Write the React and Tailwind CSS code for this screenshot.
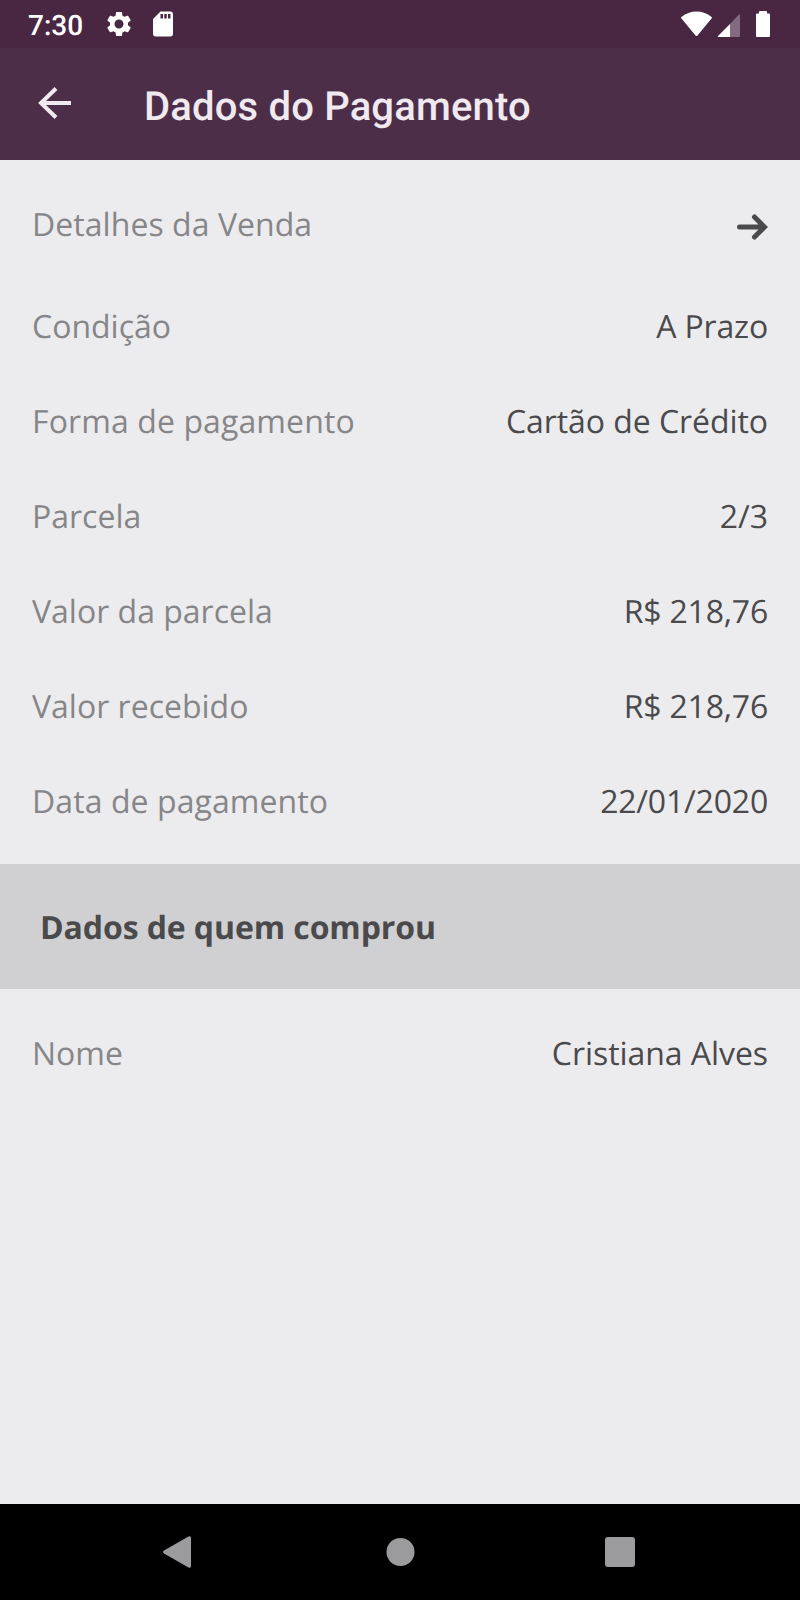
const rows = [
  { label: "Condição", value: "A Prazo", valueClass: "tracking-[-0.15px]" },
  {
    label: "Forma de pagamento",
    value: "Cartão de Crédito",
    labelClass: "tracking-[0.11px]",
    valueClass: "tracking-[-0.06px]",
  },
  { label: "Parcela", value: "2/3" },
  { label: "Valor da parcela", value: "R$ 218,76", valueClass: "tracking-[-0.2px]" },
  { label: "Valor recebido", value: "R$ 218,76", valueClass: "tracking-[-0.2px]" },
  {
    label: "Data de pagamento",
    value: "22/01/2020",
    labelClass: "tracking-[0.08px]",
    valueClass: "tracking-[-0.2px]",
  },
];

const InfoRow = ({ label, value, labelClass = "", valueClass = "" }) => (
  <div className="flex h-[95px] items-center justify-between px-8 pt-0.5">
    <span className={`text-[#868688] ${labelClass}`}>{label}</span>
    <span className={`text-[#4a4a4c] ${valueClass}`}>{value}</span>
  </div>
);

const StatusBar = () => (
  <div className="flex h-12 items-center bg-[#492742] pl-7 pr-[30px] text-white">
    <span className="w-[76px] pt-[3px] font-[Roboto] text-[28px] font-medium">7:30</span>
    <svg className="h-[30px] w-[30px]" viewBox="0 0 24 24" fill="currentColor">
      <path d="M19.14 12.94c.04-.3.06-.61.06-.94s-.02-.64-.07-.94l2.03-1.58a.49.49 0 0 0 .12-.61l-1.92-3.32a.49.49 0 0 0-.59-.22l-2.39.96a7 7 0 0 0-1.62-.94l-.36-2.54a.48.48 0 0 0-.48-.41h-3.84a.48.48 0 0 0-.47.41l-.36 2.54c-.59.24-1.13.57-1.62.94l-2.39-.96a.48.48 0 0 0-.59.22L2.74 8.87a.48.48 0 0 0 .12.61l2.03 1.58a6 6 0 0 0 0 1.88l-2.03 1.58a.49.49 0 0 0-.12.61l1.92 3.32c.12.22.37.29.59.22l2.39-.96c.5.38 1.03.7 1.62.94l.36 2.54c.05.24.24.41.48.41h3.84c.24 0 .44-.17.47-.41l.36-2.54a7 7 0 0 0 1.62-.94l2.39.96c.22.08.47 0 .59-.22l1.92-3.32a.48.48 0 0 0-.12-.61zM12 15.6A3.6 3.6 0 1 1 12 8.4a3.6 3.6 0 0 1 0 7.2" />
    </svg>
    <svg className="ml-3.5 h-[30px] w-[30px]" viewBox="0 0 24 24" fill="currentColor">
      <path d="M18 2h-8L4.02 8 4 20c0 1.1.9 2 2 2h12c1.1 0 2-.9 2-2V4c0-1.1-.9-2-2-2m-6 5.5h-2V4h2zm3 0h-2V4h2zm3 0h-2V4h2z" />
    </svg>
    <svg className="ml-auto h-[26px] w-8" viewBox="0 0 32 26" fill="currentColor">
      <path d="M1.5 6Q8 .5 16.500 .5T31.500 6Q32.500 6.500 31.500 7.500L17.500 24.500Q16.500 25.500 15.500 24.500L1.500 7.500Q.5 6.500 1.500 6z" />
    </svg>
    <svg className="ml-[5px] mt-0.5 h-[23px] w-[23px]" viewBox="0 0 23 23" fill="currentColor">
      <path fill="#846a80" d="M13 10L22 .5q1-.5 1 .5v21q0 1-1 1h-9z" />
      <path d="M13 10v13H1.500Q0 23 1 22z" />
    </svg>
    <svg className="ml-4 h-[26px] w-3.5" viewBox="0 0 14 26" fill="currentColor">
      <path d="M4 0h6q1 0 1 1v1.500h2q1 0 1 1V25q0 1-1 1H1q-1 0-1-1V3.500q0-1 1-1h2V1q0-1 1-1z" />
    </svg>
  </div>
);

export default function App() {
  return (
    <div className="flex h-[1600px] w-[800px] flex-col bg-[#ececee] font-['Open_Sans',sans-serif] text-[32px] [text-rendering:geometricPrecision]">
      <StatusBar />
      <header className="flex h-28 items-center bg-[#4d2e48] pl-[38px] text-[#f0e9f0]">
        <svg className="h-[34px] w-[34px]" viewBox="0 0 34 34" fill="none" stroke="currentColor" strokeWidth="4">
          <path d="M18 1.500L3 16l15 14.500M3 16h30" />
        </svg>
        <h1 className="ml-[72px] pt-1.5 font-[Roboto] text-[40px] font-medium tracking-[0.17px]">
          Dados do Pagamento
        </h1>
      </header>
      <main className="flex-1">
        <div className="flex h-[118px] items-center justify-between px-8 pt-3">
          <span className="tracking-[0.05px] text-[#868688]">Detalhes da Venda</span>
          <svg
            className="mt-1 h-8 w-8 text-[#4a4a4c]"
            viewBox="0 0 32 32"
            fill="none"
            stroke="currentColor"
            strokeWidth="5"
            strokeLinecap="round"
          >
            <path d="M3.500 16H28M18.500 6L28.500 16l-10 10" />
          </svg>
        </div>
        <div className="pb-4">
          {rows.map((row) => (
            <InfoRow key={row.label} {...row} />
          ))}
        </div>
        <h2 className="mb-4 flex h-[125px] items-center bg-[#d0d0d2] px-10 pt-0.5 font-bold tracking-[-0.1px] text-[#4a4a4c]">
          Dados de quem comprou
        </h2>
        <InfoRow label="Nome" value="Cristiana Alves" valueClass="tracking-[-0.06px]" />
      </main>
      {/* android navigation buttons */}
      <nav className="flex h-24 items-center justify-between bg-black pl-[161px] pr-[164px] text-[#9b9b9d]">
        <svg className="h-8 w-8" viewBox="0 0 32 32" fill="currentColor">
          <path d="M3 17.500Q1 16 3 14.500L27.500 .5Q30 -.5 30 2v28Q30 32.500 27.500 31.500z" />
        </svg>
        <svg className="h-8 w-8" viewBox="0 0 32 32" fill="currentColor">
          <circle cx="17.500" cy="16" r="14" />
        </svg>
        <svg className="h-8 w-8" viewBox="0 0 32 32" fill="currentColor">
          <rect x="1" y="1" width="30" height="30" rx="3" />
        </svg>
      </nav>
    </div>
  );
}
